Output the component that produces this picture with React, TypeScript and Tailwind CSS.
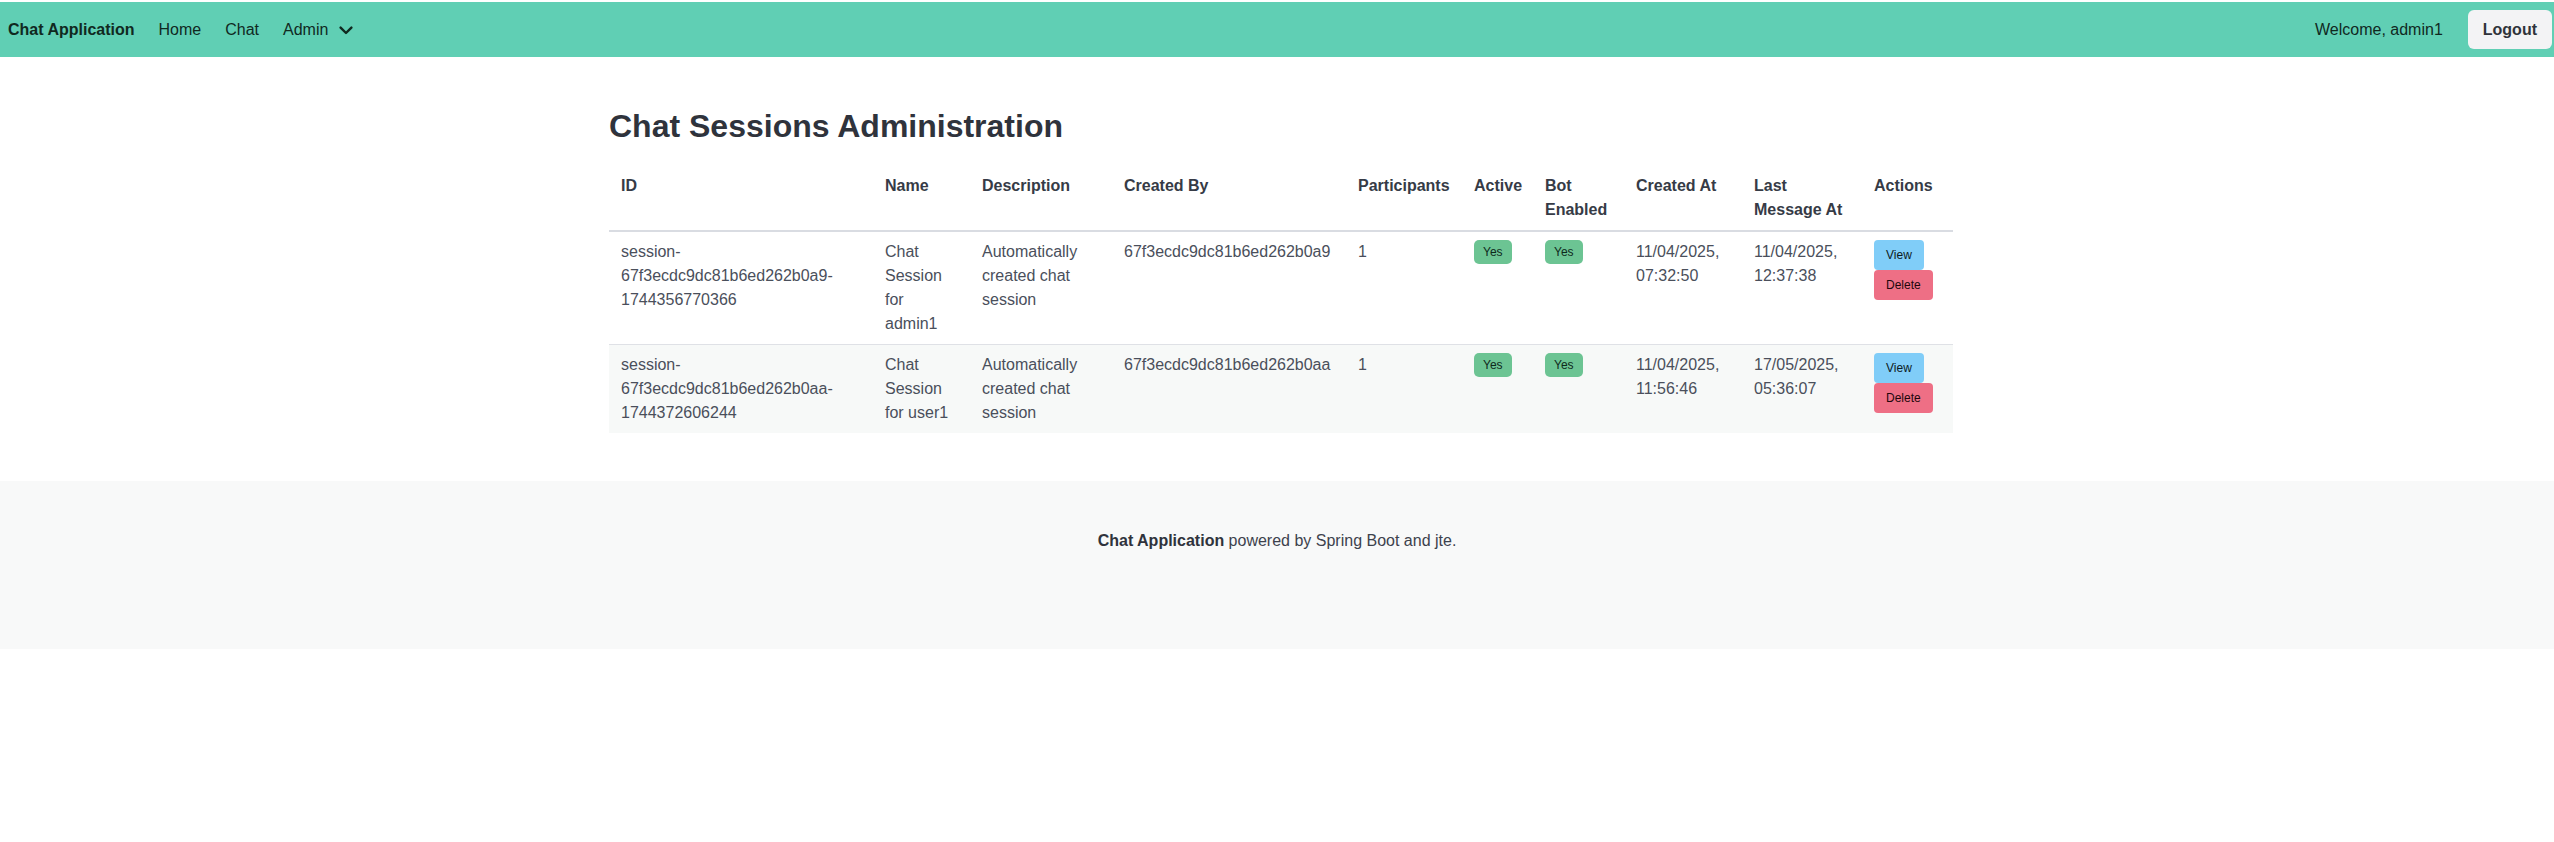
import React from "react";

type Row = {
  idA: string;
  idB: string;
  idC: string;
  name: string;
  desc: string;
  createdBy: string;
  participants: string;
  createdAt: [string, string];
  lastAt: [string, string];
  striped: boolean;
};

const rows: Row[] = [
  {
    idA: "session-",
    idB: "67f3ecdc9dc81b6ed262b0a9-",
    idC: "1744356770366",
    name: "Chat Session for admin1",
    desc: "Automatically created chat session",
    createdBy: "67f3ecdc9dc81b6ed262b0a9",
    participants: "1",
    createdAt: ["11/04/2025,", "07:32:50"],
    lastAt: ["11/04/2025,", "12:37:38"],
    striped: false,
  },
  {
    idA: "session-",
    idB: "67f3ecdc9dc81b6ed262b0aa-",
    idC: "1744372606244",
    name: "Chat Session for user1",
    desc: "Automatically created chat session",
    createdBy: "67f3ecdc9dc81b6ed262b0aa",
    participants: "1",
    createdAt: ["11/04/2025,", "11:56:46"],
    lastAt: ["17/05/2025,", "05:36:07"],
    striped: true,
  },
];

function YesTag() {
  return (
    <span className="inline-flex h-[24px] items-center rounded-[5px] bg-[#6cc493] px-[9px] align-top text-[12px] leading-none text-[#0f2a1c]">
      Yes
    </span>
  );
}

export default function App() {
  return (
    <div className="min-h-screen bg-white font-['Liberation_Sans',Arial,sans-serif]">
      <nav className="mt-[2px] flex h-[55px] items-center justify-between bg-[#60cfb4] text-[16px] leading-[24px] text-[#10291f]">
        <div className="flex items-center gap-[24px] pl-[8px]">
          <span className="font-bold">Chat Application</span>
          <span>Home</span>
          <span>Chat</span>
          <span className="flex items-center gap-[11px]">
            Admin
            <svg width="14" height="9" viewBox="0 0 14 9" fill="none" className="mt-[2px]">
              <path
                d="M1.6 1.6 L7 7 L12.4 1.6"
                stroke="currentColor"
                strokeWidth="2.4"
                strokeLinecap="round"
                strokeLinejoin="round"
              />
            </svg>
          </span>
        </div>
        <div className="flex items-center gap-[25px] pr-[2px]">
          <span>Welcome, admin1</span>
          <button className="h-[39px] rounded-[6px] bg-[#f3f3f5] px-[15px] font-bold text-[#2f333b]">
            Logout
          </button>
        </div>
      </nav>

      <main className="pb-[48px] pl-[8px] pt-[51px]">
        <div className="mx-auto w-[1344px]">
          <h1 className="mb-[22px] text-[32px] font-bold leading-[36px] text-[#2f333c]">
            Chat Sessions Administration
          </h1>
          <table className="w-[1344px] table-fixed text-left text-[16px] leading-[24px] text-[#4a4f5b]">
            <colgroup>
              <col className="w-[264px]" />
              <col className="w-[97px]" />
              <col className="w-[142px]" />
              <col className="w-[234px]" />
              <col className="w-[116px]" />
              <col className="w-[71px]" />
              <col className="w-[91px]" />
              <col className="w-[118px]" />
              <col className="w-[120px]" />
              <col className="w-[91px]" />
            </colgroup>
            <thead>
              <tr className="text-[#363b46]">
                <th className="border-b-2 border-[#d9dce2] px-[12px] py-[8px] align-top font-bold">ID</th>
                <th className="border-b-2 border-[#d9dce2] px-[12px] py-[8px] align-top font-bold">Name</th>
                <th className="border-b-2 border-[#d9dce2] px-[12px] py-[8px] align-top font-bold">Description</th>
                <th className="border-b-2 border-[#d9dce2] px-[12px] py-[8px] align-top font-bold">Created By</th>
                <th className="whitespace-nowrap border-b-2 border-[#d9dce2] px-[12px] py-[8px] align-top font-bold">Participants</th>
                <th className="border-b-2 border-[#d9dce2] px-[12px] py-[8px] align-top font-bold">Active</th>
                <th className="border-b-2 border-[#d9dce2] px-[12px] py-[8px] align-top font-bold">Bot Enabled</th>
                <th className="border-b-2 border-[#d9dce2] px-[12px] py-[8px] align-top font-bold">Created At</th>
                <th className="border-b-2 border-[#d9dce2] px-[12px] py-[8px] align-top font-bold">Last Message At</th>
                <th className="border-b-2 border-[#d9dce2] px-[12px] py-[8px] align-top font-bold">Actions</th>
              </tr>
            </thead>
            <tbody>
              {rows.map((r, i) => {
                const td =
                  "px-[12px] py-[8px] align-top " +
                  (i === rows.length - 1 ? "" : "border-b border-[#dfe1e6]");
                return (
                  <tr key={i} className={r.striped ? "bg-[#f7f9f8]" : "bg-white"}>
                    <td className={td}>
                      {r.idA}
                      <wbr />
                      {r.idB}
                      <wbr />
                      {r.idC}
                    </td>
                    <td className={td}>{r.name}</td>
                    <td className={td}>{r.desc}</td>
                    <td className={td + " whitespace-nowrap"}>{r.createdBy}</td>
                    <td className={td}>{r.participants}</td>
                    <td className={td}>
                      <YesTag />
                    </td>
                    <td className={td}>
                      <YesTag />
                    </td>
                    <td className={td}>
                      {r.createdAt[0]} {r.createdAt[1]}
                    </td>
                    <td className={td}>
                      {r.lastAt[0]} {r.lastAt[1]}
                    </td>
                    <td className={td}>
                      <div className="flex flex-col items-start">
                        <button className="h-[30px] rounded-[4px] bg-[#80cdf8] px-[12px] text-[12px] leading-none text-[#0d1b24]">
                          View
                        </button>
                        <button className="h-[30px] rounded-[4px] bg-[#ee6f85] px-[12px] text-[12px] leading-none text-[#22070c]">
                          Delete
                        </button>
                      </div>
                    </td>
                  </tr>
                );
              })}
            </tbody>
          </table>
        </div>
      </main>

      <footer className="bg-[#f8f9f9] px-[24px] pb-[96px] pt-[48px] text-center text-[16px] leading-[24px] text-[#3d424d]">
        <p>
          <strong className="font-bold text-[#2f333c]">Chat Application</strong> powered by Spring Boot and jte.
        </p>
      </footer>
    </div>
  );
}
